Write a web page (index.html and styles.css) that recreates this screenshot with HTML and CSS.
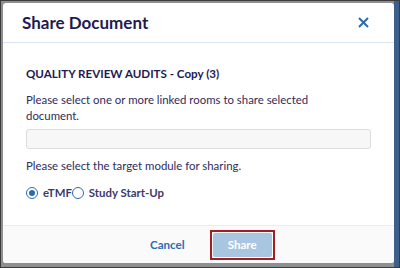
FILE: index.html
```html
<!DOCTYPE html>
<html>
<head>
<meta charset="utf-8">
<link rel="stylesheet" href="styles.css">
</head>
<body>
<div class="frame">
  <div class="modal">
    <div class="modal-header">
      <h1 class="title">Share Document</h1>
      <button class="close" aria-label="Close">
        <svg width="11" height="11" viewBox="0 0 11 11"><path d="M1 1L10 10M10 1L1 10" stroke="#2b6cb0" stroke-width="2" fill="none"/></svg>
      </button>
    </div>
    <div class="modal-body">
      <div class="doc-name">QUALITY REVIEW AUDITS - Copy (3)</div>
      <p class="label wrap">Please select one or more linked rooms to share selected document.</p>
      <div class="input"></div>
      <p class="label module-label">Please select the target module for sharing.</p>
      <div class="radios">
        <label class="radio"><span class="dot checked"></span>eTMF</label>
        <label class="radio"><span class="dot"></span>Study Start-Up</label>
      </div>
    </div>
    <div class="modal-footer">
      <button class="btn-cancel">Cancel</button>
      <span class="focus-ring"><button class="btn-share">Share</button></span>
    </div>
  </div>
</div>
</body>
</html>
```
FILE: styles.css
```css
* { box-sizing: border-box; }
html, body { margin: 0; padding: 0; }
body { font-family: Lato, "Open Sans", sans-serif; }
.frame {
  width: 400px;
  height: 268px;
  border: 1px solid #3a3a3a;
  background: linear-gradient(90deg, #8f8f8f 0, #8f8f8f 393px, #3d5f8a 393px);
  padding: 2px 5px 0 2px;
}
.modal {
  width: 391px;
  height: 260px;
  background: #fff;
  border-radius: 3px;
  display: flex;
  flex-direction: column;
  overflow: hidden;
}
.modal-header {
  height: 40px;
  flex: none;
  border-bottom: 1px solid #d9e6f2;
  display: flex;
  align-items: center;
  justify-content: space-between;
  padding: 0 25px 0 19px;
}
.title {
  margin: 0;
  font-size: 17px;
  font-weight: 700;
  color: #1e1b4f;
  line-height: 24px;
}
.close {
  border: 0;
  background: none;
  padding: 0;
  width: 11px;
  height: 11px;
  display: block;
}
.close svg { display: block; }
.modal-body {
  flex: 1;
  padding: 23px 23px 0 23px;
  color: #2f2b5c;
}
.doc-name {
  font-size: 11.6px;
  font-weight: 700;
  color: #1e1b4f;
  line-height: 16px;
}
.label {
  margin: 10px 0 0;
  font-size: 11.4px;
  line-height: 16px;
}
.wrap { max-width: 320px; }
.input {
  margin-top: 5px;
  height: 20px;
  width: 345px;
  background: #f7f7f7;
  border: 1px solid #dcdcdc;
  border-radius: 3px;
}
.module-label { margin-top: 9px; }
.radios {
  display: flex;
  margin-top: 11px;
  font-size: 11.4px;
  line-height: 16px;
  font-weight: 700;
  color: #3d3a6a;
}
.radio { display: flex; align-items: center; }
.dot {
  width: 12px;
  height: 12px;
  border: 1.5px solid #2b6cb0;
  border-radius: 50%;
  margin-right: 5px;
  position: relative;
}
.dot.checked::after {
  content: "";
  position: absolute;
  left: 1.5px; top: 1.5px;
  width: 6px; height: 6px;
  border-radius: 50%;
  background: #2b6cb0;
}
.modal-footer {
  height: 38px;
  flex: none;
  border-top: 1px solid #ececec;
  background: #fafafa;
  display: flex;
  align-items: center;
  padding-left: 147px;
}
.btn-cancel {
  border: 0;
  background: none;
  font-family: inherit;
  font-size: 11.6px;
  font-weight: 700;
  color: #2b6cb0;
  padding: 0;
  margin-right: 25px;
}
.focus-ring {
  display: block;
  border: 2px solid #a31d25;
  padding: 1px;
}
.btn-share {
  display: block;
  width: 59px;
  height: 24px;
  border: 0;
  border-radius: 2px;
  background: #a9c6e1;
  color: #fff;
  font-family: inherit;
  font-size: 11.6px;
  font-weight: 700;
  padding: 0;
}
```
